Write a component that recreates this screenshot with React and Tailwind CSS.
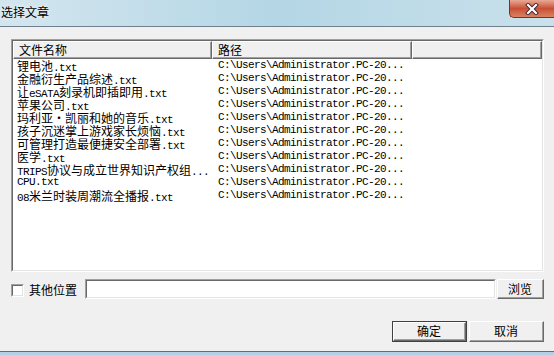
import React from "react";

const rows = [
  "锂电池.txt",
  "金融衍生产品综述.txt",
  "让eSATA刻录机即插即用.txt",
  "苹果公司.txt",
  "玛利亚·凯丽和她的音乐.txt",
  "孩子沉迷掌上游戏家长烦恼.txt",
  "可管理打造最便捷安全部署.txt",
  "医学.txt",
  "TRIPS协议与成立世界知识产权组...",
  "CPU.txt",
  "08米兰时装周潮流全播报.txt",
];

function Mixed({ text }) {
  const parts = text.split(/([\x00-\x7f]+)/).filter((p) => p.length);
  return (
    <>
      {parts.map((p, i) =>
        /^[\x00-\x7f]+$/.test(p) ? (
          <span key={i} className="block font-['Liberation_Mono'] text-[11px] leading-[13px] tracking-[-0.6px]">
            {p}
          </span>
        ) : (
          <span key={i} className="block text-[12px] leading-[13px]">{p}</span>
        )
      )}
    </>
  );
}

function Btn({ children, def }) {
  return (
    <div className={def ? "border border-[#404040] h-[21px] w-[75px]" : "h-[21px] w-[75px]"}>
      <div className="h-full w-full border-t border-l border-t-white border-l-white border-r border-b border-r-[#696969] border-b-[#696969] bg-[#f0f0f0]">
        <div className="h-full w-full border-r border-b border-r-[#a0a0a0] border-b-[#a0a0a0] flex items-center justify-center text-[12px] text-black leading-none">
          {children}
        </div>
      </div>
    </div>
  );
}

export default function App() {
  return (
    <div className="w-[554px] h-[355px] bg-[#f0f0f0] flex flex-col overflow-hidden font-['Noto_Sans_CJK_SC',sans-serif] text-black">
      {/* Title bar */}
      <div className="h-[27px] shrink-0 flex justify-between bg-gradient-to-r from-[#d3e6ef] via-[#b4d6e5] to-[#c9e1eb] border-b border-b-[#6f808c]">
        <div className="pl-[1px] pt-[4px] text-[12px] leading-[16px] [text-shadow:0_0_5px_#ffffff]">选择文章</div>
        <div className="w-[45px] h-[18px] rounded-bl-[5px] border-l border-b border-[#8a2a1c] bg-gradient-to-b from-[#eaa896] via-[#c84f34] to-[#d98262] flex items-center justify-center">
          <svg width="14" height="12" viewBox="0 0 14 12">
            <path d="M3 2 L11 10 M11 2 L3 10" stroke="#3b2430" strokeWidth="4" strokeLinecap="square" />
            <path d="M3 2 L11 10 M11 2 L3 10" stroke="#ffffff" strokeWidth="2.2" strokeLinecap="square" />
          </svg>
        </div>
      </div>

      {/* Body */}
      <div className="flex-1 flex flex-col pl-[11px] pr-[10px] pt-[12px]">
        {/* List */}
        <div className="h-[233px] border-t border-l border-t-[#a0a0a0] border-l-[#a0a0a0] border-r border-b border-r-white border-b-white">
          <div className="h-full border-t border-l border-t-[#696969] border-l-[#696969] border-r border-b border-r-[#e3e3e3] border-b-[#e3e3e3] bg-white flex flex-col">
            <div className="h-[18px] flex shrink-0 text-[12px] leading-[16px]">
              <div className="w-[199px] border-t border-l border-white border-r border-b border-r-[#696969] border-b-[#696969] bg-[#f0f0f0]">
                <div className="h-full border-r border-b border-r-[#a0a0a0] border-b-[#a0a0a0] pl-[5px]">文件名称</div>
              </div>
              <div className="w-[200px] border-t border-l border-white border-r border-b border-r-[#696969] border-b-[#696969] bg-[#f0f0f0]">
                <div className="h-full border-r border-b border-r-[#a0a0a0] border-b-[#a0a0a0] pl-[5px]">路径</div>
              </div>
              <div className="flex-1 border-t border-l border-white border-r border-b border-r-[#696969] border-b-[#696969] bg-[#f0f0f0]">
                <div className="h-full border-r border-b border-r-[#a0a0a0] border-b-[#a0a0a0]"></div>
              </div>
            </div>
            <div className="flex flex-col">
              {rows.map((r) => (
                <div key={r} className="h-[13px] flex whitespace-nowrap overflow-hidden">
                  <div className="w-[199px] h-[13px] pl-[4px] flex items-baseline overflow-hidden">
                    <Mixed text={r} />
                  </div>
                  <div className="pl-[6px] h-[13px] font-['Liberation_Mono'] text-[11px] leading-[13px] tracking-[-0.6px]">
                    C:\Users\Administrator.PC-20...
                  </div>
                </div>
              ))}
            </div>
          </div>
        </div>

        {/* Other location row */}
        <div className="mt-[7px] h-[20px] flex items-center">
          <div className="w-[13px] h-[13px] mt-[2px] border-t border-l border-t-[#a0a0a0] border-l-[#a0a0a0] border-r border-b border-r-white border-b-white">
            <div className="w-full h-full border-t border-l border-t-[#696969] border-l-[#696969] border-r border-b border-r-[#e3e3e3] border-b-[#e3e3e3] bg-white"></div>
          </div>
          <div className="ml-[5px] text-[12px] leading-[14px] mt-[1px] w-[56px]">其他位置</div>
          <div className="w-[412px] h-[20px] border-t border-l border-t-[#a0a0a0] border-l-[#a0a0a0] border-r border-b border-r-white border-b-white">
            <div className="w-full h-full border-t border-l border-t-[#696969] border-l-[#696969] border-r border-b border-r-[#e3e3e3] border-b-[#e3e3e3] bg-white"></div>
          </div>
          <div className="ml-[1px] h-[20px] w-[47px] border-t border-l border-t-white border-l-white border-r border-b border-r-[#696969] border-b-[#696969]">
            <div className="h-full w-full border-r border-b border-r-[#a0a0a0] border-b-[#a0a0a0] flex items-center justify-center text-[12px] leading-none">浏览</div>
          </div>
        </div>

        {/* Buttons */}
        <div className="mt-[22px] flex justify-end gap-[2px]">
          <Btn def>确定</Btn>
          <Btn>取消</Btn>
        </div>
      </div>

      {/* Bottom frame */}
      <div className="h-[4px] shrink-0 border-t border-t-[#5d6d79] bg-[#b4cfe6]"></div>
    </div>
  );
}
